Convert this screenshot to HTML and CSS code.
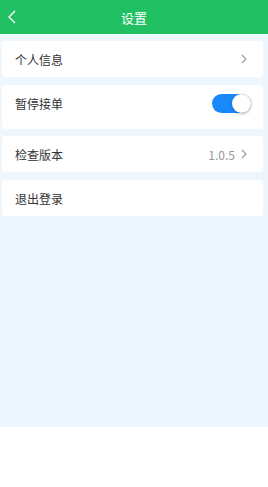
FILE: index.html
```html
<!DOCTYPE html>
<html lang="zh-CN">
<head>
  <meta charset="UTF-8" />
  <meta name="viewport" content="width=device-width, initial-scale=1" />
  <title>设置</title>
  <link rel="stylesheet" href="styles.css">
</head>
<body>

<header class="nav-bar">
  <span class="nav-back">
    <svg width="8" height="14" viewBox="0 0 8 14"><path d="M7 1 L1 7 L7 13" fill="none" stroke="#fff" stroke-width="1.3"/></svg>
  </span>
  <span class="nav-title">设置</span>
</header>

<div class="page">
  <div class="cell">
    <span class="cell-label">个人信息</span>
    <span class="cell-arrow">
      <svg width="6" height="10" viewBox="0 0 6 10"><path d="M1 1 L5 5 L1 9" fill="none" stroke="#999" stroke-width="1.1"/></svg>
    </span>
  </div>

  <div class="cell cell-tall">
    <span class="cell-label">暂停接单</span>
    <span class="switch on"><span class="switch-knob"></span></span>
  </div>

  <div class="cell">
    <span class="cell-label">检查版本</span>
    <span class="cell-value">1.0.5</span>
    <span class="cell-arrow">
      <svg width="6" height="10" viewBox="0 0 6 10"><path d="M1 1 L5 5 L1 9" fill="none" stroke="#999" stroke-width="1.1"/></svg>
    </span>
  </div>

  <div class="cell">
    <span class="cell-label">退出登录</span>
  </div>
</div>

</body>
</html>
```

FILE: styles.css
```css
body {
  margin: 0;
  font-family: "Noto Sans CJK SC", "Noto Sans", sans-serif;
  background: #fff;
}

.nav-bar {
  height: 34px;
  background: #21c163;
  display: flex;
  align-items: center;
  justify-content: center;
  position: relative;
}

.nav-back {
  position: absolute;
  left: 8px;
  top: 10px;
  display: flex;
}

.nav-title {
  color: #fff;
  font-size: 13px;
}

.page {
  background: #eef6fe;
  height: 393px;
  padding: 7px 5px 0 2px;
  box-sizing: border-box;
}

.cell {
  background: #fff;
  border-radius: 4px;
  height: 36px;
  margin-bottom: 8px;
  padding: 0 16px 0 13px;
  display: flex;
  align-items: center;
}

.cell-tall {
  height: 44px;
  padding-bottom: 8px;
  padding-right: 12px;
  box-sizing: border-box;
  margin-bottom: 7px;
}

.cell-label {
  flex: 1;
  font-size: 12px;
  color: #323233;
}

.cell-value {
  font-size: 12px;
  color: #969799;
  margin-right: 6px;
}

.cell-arrow {
  display: flex;
}

.switch {
  width: 39px;
  height: 19px;
  border-radius: 10px;
  background: #ddd;
  position: relative;
}

.switch.on {
  background: #1989fa;
}

.switch-knob {
  position: absolute;
  right: 0;
  top: 0;
  width: 19px;
  height: 19px;
  border-radius: 50%;
  background: #fff;
  box-shadow: 0 1px 3px rgba(0,0,0,0.3);
}
```
